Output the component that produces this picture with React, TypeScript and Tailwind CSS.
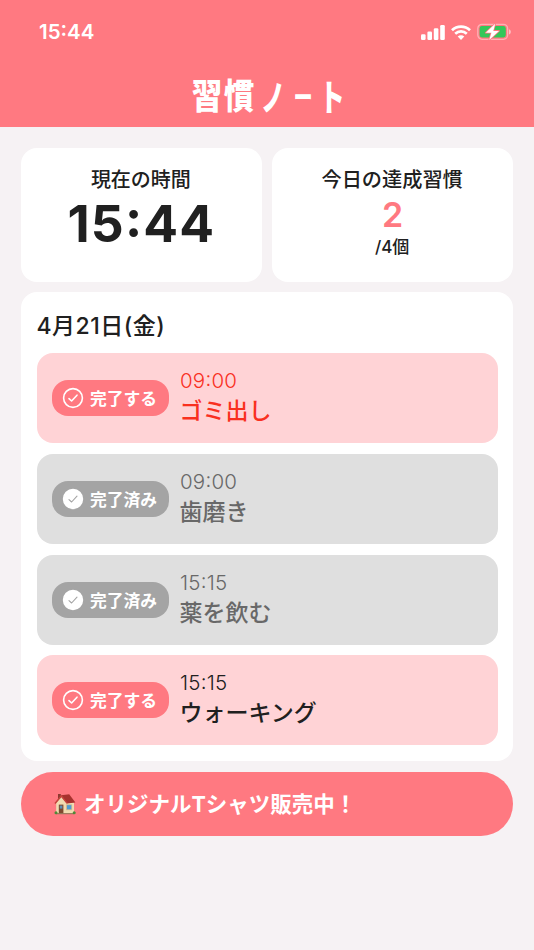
import React from 'react';

interface Habit {
  time: string;
  name: string;
  done: boolean;
  overdue?: boolean;
}

const habits: Habit[] = [
  { time: '09:00', name: 'ゴミ出し', done: false, overdue: true },
  { time: '09:00', name: '歯磨き', done: true },
  { time: '15:15', name: '薬を飲む', done: true },
  { time: '15:15', name: 'ウォーキング', done: false },
];

const SignalIcon = () => (
  <svg width="24" height="15" viewBox="0 0 24 15" fill="white">
    <rect x="0" y="9.2" width="4.6" height="5.8" rx="1.3" />
    <rect x="6.4" y="6.4" width="4.6" height="8.6" rx="1.3" />
    <rect x="12.8" y="3.3" width="4.6" height="11.7" rx="1.3" />
    <rect x="19.2" y="0" width="4.6" height="15" rx="1.3" />
  </svg>
);

const WifiIcon = () => (
  <svg width="20" height="15" viewBox="0 0 20 15" fill="none" stroke="white" strokeWidth="2.7">
    <path d="M1 5.2C6 .3 14 .3 19 5.2" />
    <path d="M4.2 8.7C7.6 5.6 12.4 5.6 15.8 8.7" />
    <path d="M10 15L6.7 11.6C8.6 9.9 11.4 9.9 13.3 11.6Z" fill="white" stroke="none" />
  </svg>
);

const BatteryIcon = () => (
  <svg width="35" height="18" viewBox="0 0 35 18">
    <rect x=".8" y="1.3" width="29.8" height="15" rx="4.2" fill="none" stroke="#ffb0b5" strokeWidth="1.3" />
    <path d="M32 6.2C34.4 7 34.4 10.6 32 11.4Z" fill="#ffc0c4" />
    <rect x="2.6" y="3.1" width="26.2" height="11.4" rx="2.4" fill="#33c759" />
    <path
      d="M18.2 .8L8.7 9.8H14.4L12.2 17L22 7.9H16.3Z"
      fill="white"
      stroke="#ff7981"
      strokeWidth="1.6"
      strokeLinejoin="round"
      paintOrder="stroke"
    />
  </svg>
);

const CheckIcon: React.FC<{ done: boolean }> = ({ done }) => (
  <svg width="22" height="22" viewBox="0 0 22 22" fill="none" strokeLinecap="round" strokeLinejoin="round">
    <circle cx="11" cy="11" r="9.4" fill={done ? 'white' : 'none'} stroke="white" strokeWidth="1.6" />
    <path d="M7 11.6L9.6 14L15 8.2" stroke={done ? '#a4a4a4' : 'white'} strokeWidth={done ? 1.1 : 1.6} />
  </svg>
);

const HouseIcon = () => (
  <svg width="22" height="22" viewBox="0 0 22 22">
    <rect x="4" y="1" width="2.8" height="5" fill="#8d3a30" />
    <path d="M2.2 10L7.4 4L12 9.5H20V20.6H2.2Z" fill="#f0dcb2" />
    <path d="M7.2 2.2L15.2 1.2L21.4 9.6L13 10.4Z" fill="#a8322e" />
    <path d="M1 10.6L7.3 3L13.2 10.4" fill="none" stroke="#c4443c" strokeWidth="1.5" />
    <rect x="4.8" y="11.6" width="4.6" height="8.8" fill="#7f4a2f" />
    <rect x="5.8" y="12.6" width="2.6" height="3" fill="#5d91b7" />
    <rect x="12.6" y="11.8" width="5.2" height="5" fill="#4e9cd4" stroke="#d7b988" strokeWidth=".7" />
    <rect x="2" y="20.2" width="18" height="1" fill="#8b7252" />
    <circle cx="2" cy="19.8" r="1.5" fill="#4f8a38" />
    <circle cx="20.2" cy="19.8" r="1.5" fill="#4f8a38" />
  </svg>
);

// Lifts the colon so that it sits centred between the digits
const Clock: React.FC<{ time: string }> = ({ time }) => {
  const [hours, minutes] = time.split(':');

  return (
    <>
      {hours}
      <span className="relative -top-[0.08em]">:</span>
      {minutes}
    </>
  );
};

const HabitRow: React.FC<{ habit: Habit }> = ({ habit }) => {
  const { time, name, done, overdue } = habit;
  const textColor = overdue ? 'text-[#f9301f]' : done ? 'text-[#686868]' : 'text-[#202020]';

  return (
    <li className={`flex h-[90px] items-center rounded-[16px] pl-[15.5px] ${done ? 'bg-[#dfdfdf]' : 'bg-[#ffd3d6]'}`}>
      <button
        className={`flex h-9 w-[117px] items-center gap-[6px] rounded-[16px] pl-[10px] text-white ${
          done ? 'bg-[#a4a4a4]' : 'bg-[#ff7981]'
        }`}
      >
        <CheckIcon done={done} />
        <span className="pt-[2px] text-[16.8px] leading-[34px] font-bold whitespace-nowrap">
          {done ? '完了済み' : '完了する'}
        </span>
      </button>
      <div className={`ml-[11px] flex flex-col ${textColor}`}>
        <span className="text-[20.5px] leading-[26px] font-light tracking-[0.2px]">
          <Clock time={time} />
        </span>
        <span className="-ml-[0.5px] text-[23px] leading-[34px] font-medium whitespace-nowrap">{name}</span>
      </div>
    </li>
  );
};

const App = () => {
  return (
    <div className="flex h-[950px] w-[534px] flex-col overflow-hidden bg-[#f6f2f4] font-['Inter','Noto_Sans_CJK_JP',sans-serif] text-[#202020]" lang="ja">
      <header className="flex h-[126.5px] flex-col bg-[#ff7981] text-white">
        <div className="flex h-[65px] items-center justify-between pr-[22px] pl-[39px]">
          <span className="pt-px text-[20.5px] font-semibold">
            <Clock time="15:44" />
          </span>
          <div className="flex items-center gap-[6px]">
            <SignalIcon />
            <WifiIcon />
            <BatteryIcon />
          </div>
        </div>
        <h1 className="flex justify-center pt-px pl-[8px] text-[32px] leading-[61px] font-black">
          <span className="w-8 scale-x-95 scale-y-110">習</span>
          <span className="w-8 scale-x-95 scale-y-110">慣</span>
          <span className="w-8 translate-x-0.5 translate-y-0.5 scale-x-[.75] scale-y-110">ノ</span>
          <span className="w-8 translate-y-px scale-x-[.6] font-bold">ー</span>
          <span className="w-8 -translate-x-[3px] translate-y-px scale-x-[.8] scale-y-[1.15] font-black">ト</span>
        </h1>
      </header>

      <main className="flex flex-col gap-[10.5px] px-[21px] pt-[21px]">
        <section className="grid grid-cols-2 gap-[10.5px] text-center">
          <div className="h-[134px] rounded-[16px] bg-white pt-[17px]">
            <h2 className="-ml-px text-[20px] leading-[30px] font-medium">現在の時間</h2>
            <p className="-mt-[2px] text-[51.5px] leading-[60px] font-bold tracking-[1.2px]">
              <Clock time="15:44" />
            </p>
          </div>
          <div className="h-[134px] rounded-[16px] bg-white pt-[17px]">
            <h2 className="-ml-px text-[20.2px] leading-[30px] font-medium">今日の達成習慣</h2>
            <p className="text-[34px] leading-[40px] font-semibold text-[#ff7981]">2</p>
            <p className="-ml-px text-[17px] leading-[25px] font-medium">/4個</p>
          </div>
        </section>

        <section className="h-[469px] rounded-[16px] bg-white px-[15.5px] pt-[17px]">
          <h2 className="text-[23px] leading-[34px] font-medium tracking-[0.5px]">4月21日(金)</h2>
          <ul className="mt-[10px] flex flex-col gap-[10.8px]">
            {habits.map((habit, index) => (
              <HabitRow key={index} habit={habit} />
            ))}
          </ul>
        </section>

        <a className="flex h-[64px] items-center gap-[8px] rounded-full bg-[#ff7981] pl-[33px] text-white">
          <HouseIcon />
          <span className="pt-px text-[21.5px] leading-[30px] font-bold whitespace-nowrap">オリジナルTシャツ販売中！</span>
        </a>
      </main>
    </div>
  );
};

export default App;
